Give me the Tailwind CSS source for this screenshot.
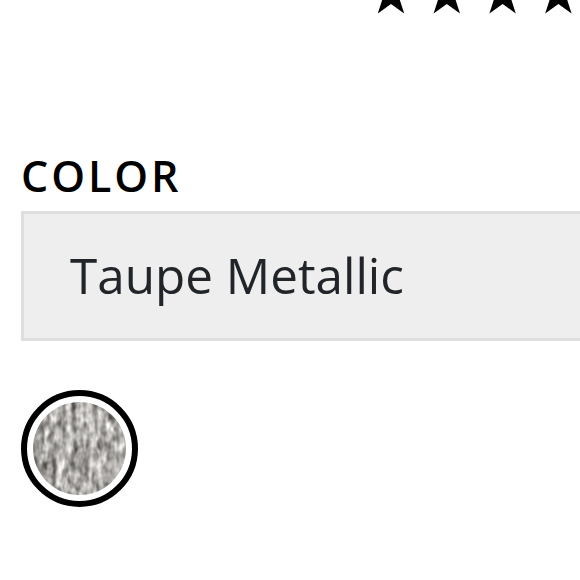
<!DOCTYPE html>
<html lang="en">
<head>
  <meta charset="UTF-8" />
  <meta name="viewport" content="width=device-width, initial-scale=1.0"/>
  <title>Choose a color</title>
  <script src="https://cdn.jsdelivr.net/npm/@tailwindcss/browser@4"></script>
</head>
<body class="bg-white font-['Open_Sans',sans-serif] w-[580px] h-[580px] overflow-hidden">
  <!-- Rating -->
  <div class="h-[150px] pl-[369px] overflow-hidden">
    <svg class="w-[211px] h-[60px] -mt-[35px]" viewBox="0 0 211 60" fill="#000">
      <defs>
        <path id="star" d="M0-22.5 5.05-6.95 21.4-6.95 8.17 2.65 13.2 18.1 0 8.6-13.2 18.1-8.17 2.65-21.4-6.95-5.05-6.95Z" />
      </defs>
      <use href="#star" x="22" y="30.3" />
      <use href="#star" x="77.8" y="30.3" />
      <use href="#star" x="133.6" y="30.3" />
      <use href="#star" x="189.4" y="30.3" />
    </svg>
  </div>

  <main class="pl-[21px]">
    <h2 class="h-[61px] leading-[51px] text-[43px] font-semibold tracking-[2.9px] text-black">COLOR</h2>
    <div class="h-[130px] border-[3px] border-r-0 border-[#dedede] bg-[#eeeeee] pl-[46px] pb-[2px] flex items-center">
      <span class="text-[49.4px] leading-none text-[#212529]">Taupe Metallic</span>
    </div>

    <!-- Swatch -->
    <button class="block mt-[49px] size-[117px] rounded-full border-6 border-black p-[6px]" aria-label="Taupe Metallic">
      <svg class="block size-[93px] rounded-full" viewBox="0 0 93 93">
        <filter id="knit" x="0" y="0" width="100%" height="100%" color-interpolation-filters="sRGB">
          <feTurbulence type="fractalNoise" baseFrequency="0.13 0.025" numOctaves="2" seed="21" result="ribs" />
          <feTurbulence type="fractalNoise" baseFrequency="0.17 0.1" numOctaves="2" seed="4" result="grain" />
          <feComposite in="ribs" in2="grain" operator="arithmetic" k2="0.5" k3="0.6" />
          <feColorMatrix values="1.3 .8 0 0 -.37  1.3 .8 0 0 -.38  1.3 .8 0 0 -.395  0 0 0 0 1" />
        </filter>
        <rect width="93" height="93" filter="url(#knit)" />
      </svg>
    </button>
  </main>
</body>
</html>
